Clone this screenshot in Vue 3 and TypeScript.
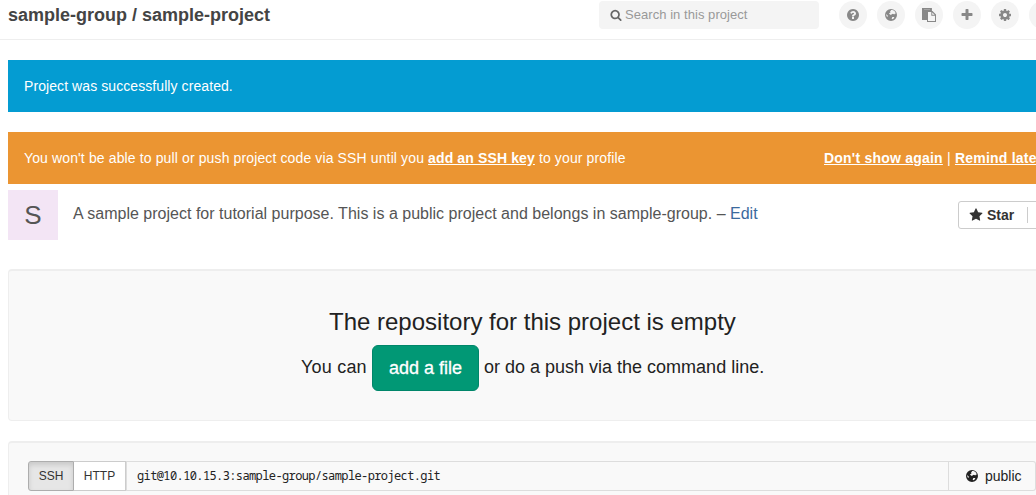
<script setup lang="ts">
import { ref } from 'vue'

interface Icon {
  name: string
  path: string
}

const searchPath =
  'M1216 832q0-185-131.5-316.5t-316.5-131.5-316.5 131.5-131.5 316.5 131.5 316.5 316.5 131.5 316.5-131.5 131.5-316.5zm512 832q0 52-38 90t-90 38q-54 0-90-38l-343-342q-179 124-399 124-143 0-273.5-55.5t-225-150-150-225-55.5-273.5 55.5-273.5 150-225 225-150 273.5-55.5 273.5 55.5 225 150 150 225 55.5 273.5q0 220-124 399l343 343q37 37 37 90z'
const globePath =
  'M896 128a768 768 0 1 0 0 1536a768 768 0 1 0 0-1536zM900 250L1090 250L1300 350L1440 520L1480 680L1390 820L1290 740L1180 810L1080 720L960 830L880 900L780 830L690 760L650 680L780 620L850 520L750 430L870 360ZM1060 1150L1330 1150L1230 1330L1080 1440L980 1380ZM270 760L400 880L520 1010L430 1120L330 1060Z'
const starPath =
  'M1728 647q0 22-26 48l-363 354 86 500q1 7 1 20 0 21-10.5 35.5t-30.5 14.5q-19 0-40-12l-449-236-449 236q-22 12-40 12-21 0-31.5-14.5t-10.5-35.5q0-6 2-20l86-500-364-354q-25-27-25-48 0-37 56-46l502-73 225-455q19-41 49-41t49 41l225 455 502 73q56 9 56 46z'

const icons: Icon[] = [
  {
    name: 'help',
    path: 'M1024 1376v-192q0-14-9-23t-23-9h-192q-14 0-23 9t-9 23v192q0 14 9 23t23 9h192q14 0 23-9t9-23zm256-672q0-88-55.5-163t-138.5-116-170-41q-243 0-371 213-15 24 8 42l132 100q7 6 19 6 16 0 25-12 53-68 86-92 34-24 86-24 48 0 85.5 26t37.5 59q0 38-20 61t-68 45q-63 28-115.5 86.5t-52.5 125.5v36q0 14 9 23t23 9h192q14 0 23-9t9-23q0-19 21.5-49.5t54.5-49.5q32-18 49-28.5t46-35 44.5-48 28-60.5 12.5-81zm384 192q0 209-103 385.5t-279.5 279.5-385.5 103-385.5-103-279.5-279.5-103-385.5 103-385.5 279.5-279.5 385.5-103 385.5 103 279.5 279.5 103 385.5z',
  },
  { name: 'explore', path: globePath },
  {
    name: 'snippets',
    path: 'M0 0H1270V384H640V1536H0ZM256 128V170H1024V128ZM640 384H1344L1792 832V1792H640ZM768 512V1664H1664V1000H1190V512ZM1310 560V870H1620Z',
  },
  {
    name: 'new',
    path: 'M1600 736v192q0 40-28 68t-68 28h-416v416q0 40-28 68t-68 28h-192q-40 0-68-28t-28-68v-416h-416q-40 0-68-28t-28-68v-192q0-40 28-68t68-28h416v-416q0-40 28-68t68-28h192q40 0 68 28t28 68v416h416q40 0 68 28t28 68z',
  },
  {
    name: 'settings',
    path: 'M1152 896q0-106-75-181t-181-75-181 75-75 181 75 181 181 75 181-75 75-181zm512-109v222q0 12-8 23t-20 13l-185 28q-19 54-39 91 35 50 107 138 10 12 10 25t-9 23q-27 37-99 108t-94 71q-12 0-26-9l-138-108q-44 23-91 38-16 136-29 186-7 28-36 28h-222q-14 0-24.500-8.500t-11.500-21.500l-28-184q-49-16-90-37l-141 107q-10 9-25 9-14 0-25-11-126-114-165-168-7-10-7-23 0-12 8-23 15-21 51-66.500t54-70.500q-27-50-41-99l-183-27q-13-2-21-12.500t-8-23.500v-222q0-12 8-23t19-13l186-28q14-46 39-92-40-57-107-138-10-12-10-24 0-10 9-23 26-36 98.500-107.500t94.500-71.500q13 0 26 10l138 107q44-23 91-38 16-136 29-186 7-28 36-28h222q14 0 24.500 8.500t11.500 21.500l28 184q49 16 90 37l142-107q9-9 24-9 13 0 25 10 129 119 165 170 7 8 7 22 0 12-8 23-15 21-51 66.500t-54 70.500q26 50 41 98l183 28q13 2 21 12.500t8 23.500z',
  },
  { name: 'more', path: '' },
]

const protocol = ref<'SSH' | 'HTTP'>('SSH')
</script>

<template>
  <div class="page">
    <header class="top">
      <h1>sample-group / sample-project</h1>
      <div class="search">
        <svg class="ic-search" viewBox="0 0 1792 1792"><path :d="searchPath" /></svg>
        <span>Search in this project</span>
      </div>
      <nav class="round-list">
        <a v-for="icon in icons" :key="icon.name" class="round" :class="icon.name">
          <svg viewBox="0 0 1792 1792"><path fill-rule="evenodd" :d="icon.path" /></svg>
        </a>
      </nav>
    </header>

    <main class="content">
      <div class="flash notice">Project was successfully created.</div>
      <div class="flash warn">
        <span>You won't be able to pull or push project code via SSH until you <a>add an SSH key</a> to your profile</span>
        <span class="warn-links"><a>Don't show again</a> | <a>Remind later</a></span>
      </div>

      <section class="project">
        <div class="avatar">S</div>
        <p>A sample project for tutorial purpose. This is a public project and belongs in sample-group. – <a>Edit</a></p>
        <button class="star">
          <svg viewBox="0 0 1792 1792"><path :d="starPath" /></svg>
          <span>Star</span>
          <i></i>
        </button>
      </section>

      <section class="well empty">
        <h2>The repository for this project is empty</h2>
        <div class="line">
          <span>You can</span>
          <button class="add">add a file</button>
          <span class="rest">or do a push via the command line.</span>
        </div>
      </section>

      <section class="well clone">
        <div class="group">
          <button class="proto ssh" :class="{ active: protocol === 'SSH' }" @click="protocol = 'SSH'">SSH</button>
          <button class="proto http" :class="{ active: protocol === 'HTTP' }" @click="protocol = 'HTTP'">HTTP</button>
          <div class="url">git@10.10.15.3:sample-group/sample-project.git</div>
          <div class="visibility">
            <svg viewBox="0 0 1792 1792"><path fill-rule="evenodd" :d="globePath" /></svg>
            <span>public</span>
          </div>
        </div>
      </section>
    </main>
  </div>
</template>

<style>
body {
  margin: 0;
  overflow: hidden;
  background: #fff;
}
</style>

<style scoped>
* {
  box-sizing: border-box;
}
.page {
  width: 1036px;
  height: 495px;
  overflow: hidden;
  font-family: "Liberation Sans", Arial, sans-serif;
  font-size: 14px;
  color: #333;
}
svg {
  display: block;
  fill: currentColor;
  flex: none;
}
.top {
  display: flex;
  height: 40px;
  border-bottom: 1px solid #eee;
  padding-left: 8px;
}
h1 {
  margin: 0;
  width: 591px;
  flex: none;
  font-size: 18px;
  line-height: 30px;
  color: #444;
  white-space: nowrap;
}
.search {
  display: flex;
  align-items: center;
  flex: none;
  width: 220px;
  height: 28px;
  margin-top: 1px;
  padding: 0 0 1px 11px;
  border-radius: 4px;
  background: #f4f4f4;
  font-size: 13px;
  letter-spacing: 0.05px;
  color: #999;
}
.ic-search {
  width: 12px;
  height: 12px;
  color: #666;
  margin-right: 3px;
}
.round-list {
  display: flex;
  gap: 10px;
  margin: 1px 0 0 20px;
}
.round {
  display: flex;
  flex: none;
  align-items: center;
  justify-content: center;
  width: 28px;
  height: 28px;
  border-radius: 50%;
  background: #f4f4f4;
  color: #888;
}
.round svg {
  width: 14px;
  height: 14px;
}
.content {
  width: 1040px;
  padding: 20px 0 0 8px;
}
.flash {
  display: flex;
  height: 52px;
  padding: 0 0 0 16px;
  line-height: 52px;
  color: #fff;
  white-space: nowrap;
}
.notice {
  background: #049cd2;
  margin-bottom: 20px;
  letter-spacing: 0.08px;
}
.warn {
  background: #eb9532;
  letter-spacing: 0.125px;
}
.warn-links {
  letter-spacing: 0.22px;
}
.flash a {
  font-weight: bold;
  text-decoration: underline;
}
.warn > span:first-child {
  width: 800px;
  flex: none;
}
.project {
  display: flex;
  height: 86px;
  padding-top: 6px;
}
.avatar {
  flex: none;
  width: 50px;
  height: 50px;
  background: #f3e5f5;
  color: #555;
  font-size: 26px;
  line-height: 50px;
  text-align: center;
}
.project p {
  margin: 0 0 0 15px;
  width: 885px;
  flex: none;
  font-size: 16px;
  line-height: 47px;
  letter-spacing: 0.01px;
  color: #555;
  white-space: nowrap;
}
.project p a {
  color: #3b6a9e;
}
.star {
  display: flex;
  align-items: center;
  flex: none;
  width: 100px;
  height: 28px;
  margin-top: 11px;
  padding: 0 0 0 10px;
  border: 1px solid #ccc;
  border-radius: 3px;
  background: #fff;
  color: #333;
  font: bold 14px "Liberation Sans", Arial, sans-serif;
}
.star svg {
  width: 14px;
  height: 14px;
  margin-right: 4px;
}
.star i {
  width: 1px;
  height: 16px;
  background: #ccc;
  margin-left: 13px;
}
.well {
  width: 1050px;
  border: 1px solid #eee;
  border-top-width: 2px;
  border-radius: 4px;
  background: #f9f9f9;
}
.empty {
  height: 152px;
  padding-top: 34px;
  margin-bottom: 20px;
  margin-top: -1px;
}
h2 {
  margin: 0;
  padding-left: 320px;
  font-size: 24px;
  font-weight: normal;
  line-height: 34px;
  color: #222;
}
.line {
  display: flex;
  align-items: center;
  height: 46px;
  margin-top: 6px;
  padding-left: 292px;
  font-size: 18px;
  color: #222;
  white-space: nowrap;
}
.line span {
  line-height: 20px;
  padding-bottom: 2px;
}
.line span:first-child {
  width: 71px;
  letter-spacing: 0.2px;
}
.add {
  width: 107px;
  height: 46px;
  padding: 0;
  border: 1px solid #00866a;
  border-radius: 6px;
  background: #019875;
  color: #fff;
  font: 18px "Liberation Sans", Arial, sans-serif;
  -webkit-text-stroke: 0.3px #fff;
  margin-right: 5px;
}
.clone {
  height: 90px;
  padding: 18px 0 0 19px;
}
.group {
  display: flex;
  height: 30px;
}
.proto {
  height: 30px;
  padding: 0;
  border: 1px solid #ccc;
  background: #fff;
  color: #333;
  font: 12px "Liberation Sans", Arial, sans-serif;
}
.ssh {
  width: 46px;
  border-radius: 3px 0 0 3px;
}
.http {
  width: 52px;
  border-left: 0;
}
.proto.active {
  background: #e6e6e6;
  border-color: #adadad;
  box-shadow: inset 0 3px 5px rgba(0, 0, 0, 0.125);
}
.url {
  width: 823px;
  height: 30px;
  padding-left: 10px;
  border: 1px solid #ddd;
  font: 12px/28px "Noto Sans Mono", "DejaVu Sans Mono", "Liberation Mono", monospace;
  letter-spacing: -0.61px;
  color: #222;
}
.visibility {
  display: flex;
  align-items: center;
  width: 87px;
  height: 30px;
  padding-left: 16px;
  border: 1px solid #ddd;
  border-left: 0;
  border-radius: 0 3px 3px 0;
  font-size: 14px;
  color: #222;
}
.visibility svg {
  width: 14px;
  height: 14px;
  margin-right: 6px;
}
</style>
